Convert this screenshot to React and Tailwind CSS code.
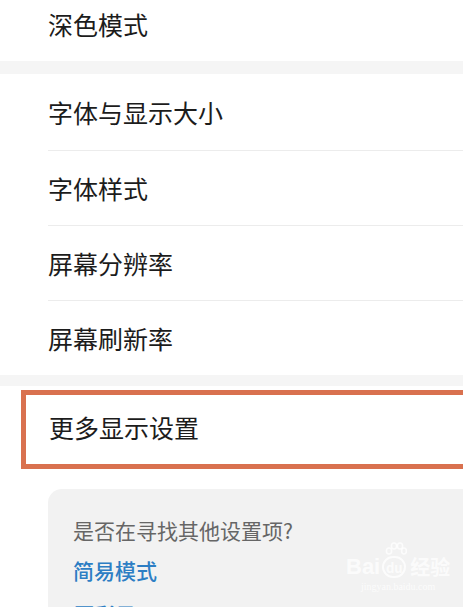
const font = { fontFamily: '"Noto Sans CJK SC", "Noto Sans", sans-serif' };

function Row({ label, h, last }) {
  return (
    <div className="pl-[48px]">
      <div
        className={`flex items-center pt-[1px] ${h} ${last ? '' : 'border-b border-[#ececec]'}`}
      >
        <span className="text-[25px] leading-none text-[#1c1c1c]">{label}</span>
      </div>
    </div>
  );
}

export default function App() {
  return (
    <div style={font} className="relative h-[607px] w-[463px] overflow-hidden bg-white">
      {/* top row, partly scrolled away */}
      <div className="h-[61px] overflow-hidden bg-white pl-[48px]">
        <div className="-mt-[14px] flex h-[75px] items-center pt-[2px]">
          <span className="text-[25px] leading-none text-[#1c1c1c]">深色模式</span>
        </div>
      </div>
      <div className="h-[13px] bg-[#f5f5f5]" />

      <div className="bg-white">
        <Row label="字体与显示大小" h="h-[77px]" />
        <Row label="字体样式" h="h-[75px]" />
        <Row label="屏幕分辨率" h="h-[75px]" />
        <Row label="屏幕刷新率" h="h-[74px]" last />
      </div>
      <div className="h-[11px] bg-[#f5f5f5]" />

      <div className="pt-[4px]">
        <div className="ml-[21px] flex h-[79px] items-center border-y-[5px] border-l-[5px] border-[#d9714f] pb-[4px] pl-[23px]">
          <span className="text-[25px] leading-none text-[#1c1c1c]">更多显示设置</span>
        </div>
      </div>

      <div className="pt-[20px]">
        <div className="ml-[48px] h-[200px] rounded-tl-[14px] bg-[#f2f2f2] pl-[25px] pt-[31px]">
          <p className="text-[21px] leading-none text-[#666666]">是否在寻找其他设置项?</p>
          <p className="mt-[19px] text-[21px] font-medium leading-none text-[#2d7ec4]">简易模式</p>
          <p className="mt-[23px] text-[21px] font-medium leading-none text-[#2d7ec4]">原彩显示</p>
        </div>
      </div>

      {/* watermark */}
      <div className="pointer-events-none absolute left-[346px] top-[556px] flex flex-col items-center text-white/75">
        <div className="flex items-center gap-[2px]">
          <span className="text-[22px] font-bold leading-none" style={{ fontFamily: '"Liberation Sans", sans-serif' }}>
            Bai
          </span>
          <span className="relative flex h-[22px] w-[24px] items-center justify-center rounded-full border-2 border-white/75 text-[13px] font-bold leading-none">
            du
            <svg className="absolute -top-[16px] left-[1px]" width="22" height="14" viewBox="0 0 22 14" fill="none" stroke="currentColor" strokeWidth="1.6">
              <ellipse cx="4" cy="9" rx="2.6" ry="3" />
              <ellipse cx="9" cy="4" rx="2.6" ry="3" />
              <ellipse cx="15" cy="4" rx="2.6" ry="3" />
              <ellipse cx="19" cy="9" rx="2.4" ry="3" />
            </svg>
          </span>
          <span className="ml-[2px] text-[20px] font-bold leading-none">经验</span>
        </div>
        <span className="mt-[4px] text-[10px] leading-none" style={{ fontFamily: '"Liberation Serif", serif' }}>
          jingyan.baidu.com
        </span>
      </div>
    </div>
  );
}
